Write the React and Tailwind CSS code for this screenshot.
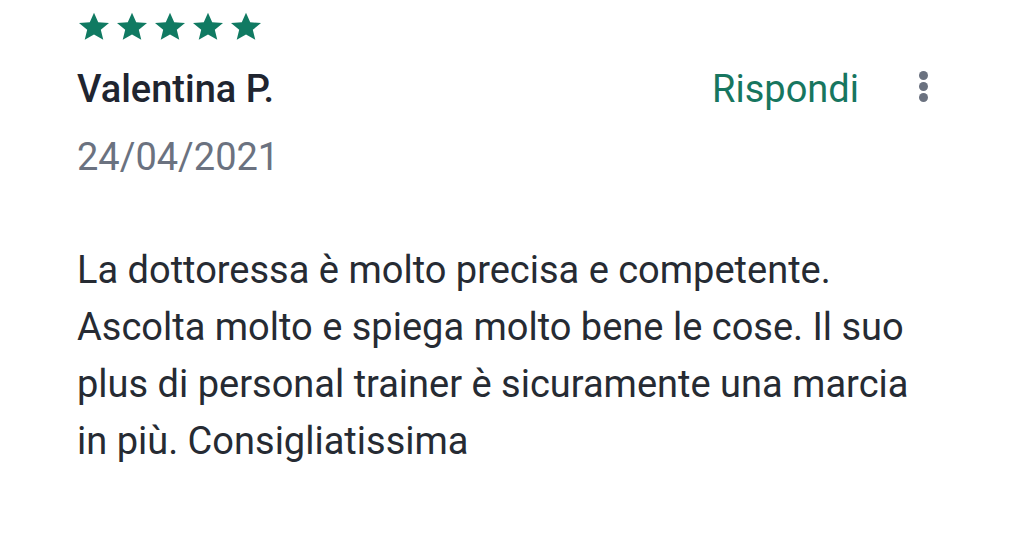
import React from "react";

const Star = () => (
  <svg viewBox="0 0 24 24" preserveAspectRatio="none" className="w-[36px] h-[34px] fill-[#107a62]">
    <path d="M12 17.27L18.18 21l-1.64-7.03L22 9.24l-7.19-.61L12 2 9.19 8.63 2 9.24l5.46 4.73L5.82 21z" />
  </svg>
);

export default function App() {
  return (
    <div className="w-[1024px] h-[538px] bg-white font-['Roboto',sans-serif] pl-[77px] pr-[96px] pt-[10px] overflow-hidden">
      {/* Stars */}
      <div className="flex gap-[2px] -ml-[1px]">
        {[0, 1, 2, 3, 4].map((i) => (
          <Star key={i} />
        ))}
      </div>

      {/* Name + actions */}
      <div className="flex items-center justify-between mt-[23px] h-[44px]">
        <p className="text-[38px] leading-[44px] font-medium text-[#1f2530]">Valentina P.</p>
        <div className="flex items-center gap-[60px]">
          <button className="text-[38px] leading-[44px] text-[#17765f]">Rispondi</button>
          <div className="flex flex-col gap-[2px] items-center mb-[6px]">
            <span className="w-[9px] h-[9px] rounded-full bg-[#6b7280]" />
            <span className="w-[9px] h-[9px] rounded-full bg-[#6b7280]" />
            <span className="w-[9px] h-[9px] rounded-full bg-[#6b7280]" />
          </div>
        </div>
      </div>

      {/* Date */}
      <p className="text-[38px] text-[#6b7280] mt-[24px] leading-[44px]">24/04/2021</p>

      {/* Review body */}
      <p className="text-[38px] text-[#262b33] leading-[57px] mt-[63px]">
        La dottoressa è molto precisa e competente.
        <br />
        Ascolta molto e spiega molto bene le cose. Il suo
        <br />
        plus di personal trainer è sicuramente una marcia
        <br />
        in più. Consigliatissima
      </p>
    </div>
  );
}
